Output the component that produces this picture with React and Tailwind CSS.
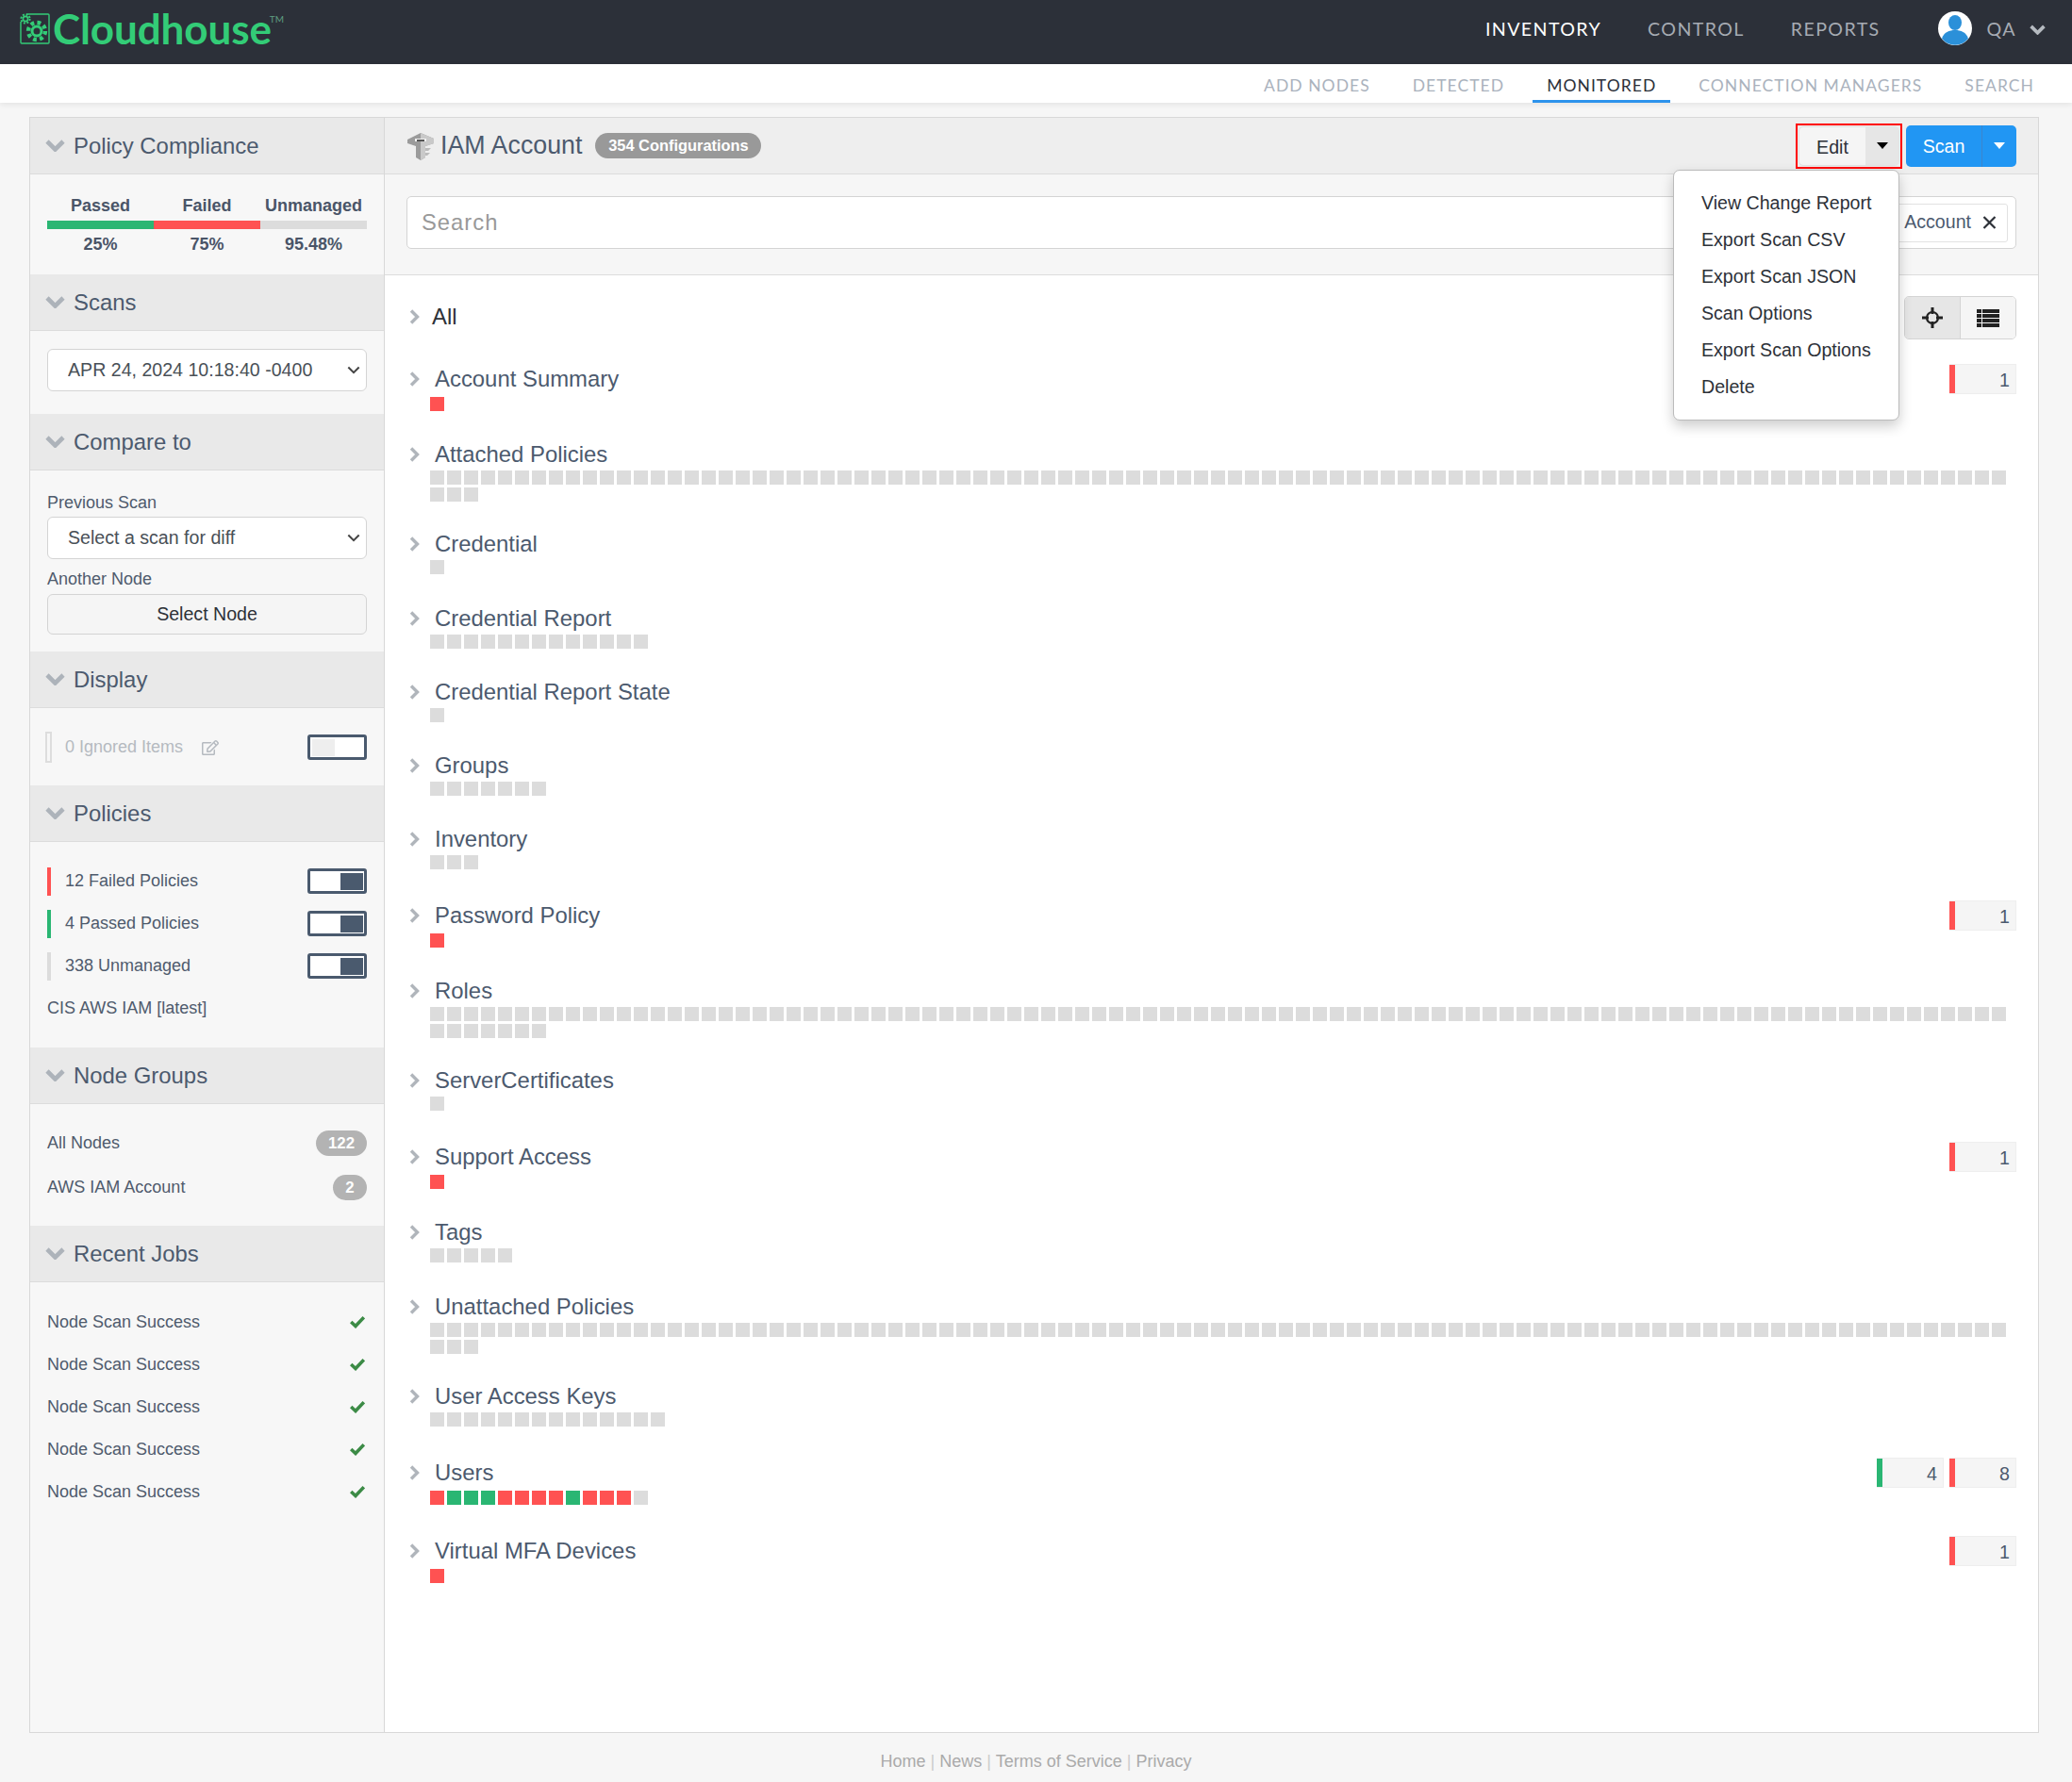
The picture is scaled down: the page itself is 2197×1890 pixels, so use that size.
import React from 'react';
import { FaRegEdit } from 'react-icons/fa';

const nav = ['INVENTORY', 'CONTROL', 'REPORTS'];
const subNav = ['ADD NODES', 'DETECTED', 'MONITORED', 'CONNECTION MANAGERS', 'SEARCH'];
const menu = ['View Change Report', 'Export Scan CSV', 'Export Scan JSON', 'Scan Options', 'Export Scan Options', 'Delete'];

const rows = [
    { name: 'All', h: 'h-[66px]', bar: '' },
    { name: 'Account Summary', h: 'h-[80px]', bar: 'r', counts: [['r', 1]] },
    { name: 'Attached Policies', h: 'h-[95px]', bar: 'x'.repeat(96) },
    { name: 'Credential', h: 'h-[79px]', bar: 'x' },
    { name: 'Credential Report', h: 'h-[78px]', bar: 'x'.repeat(13) },
    { name: 'Credential Report State', h: 'h-[78px]', bar: 'x' },
    { name: 'Groups', h: 'h-[78px]', bar: 'x'.repeat(7) },
    { name: 'Inventory', h: 'h-[81px]', bar: 'xxx' },
    { name: 'Password Policy', h: 'h-[80px]', bar: 'r', counts: [['r', 1]] },
    { name: 'Roles', h: 'h-[95px]', bar: 'x'.repeat(100) },
    { name: 'ServerCertificates', h: 'h-[81px]', bar: 'x' },
    { name: 'Support Access', h: 'h-[80px]', bar: 'r', counts: [['r', 1]] },
    { name: 'Tags', h: 'h-[79px]', bar: 'x'.repeat(5) },
    { name: 'Unattached Policies', h: 'h-[95px]', bar: 'x'.repeat(96) },
    { name: 'User Access Keys', h: 'h-[81px]', bar: 'x'.repeat(14) },
    { name: 'Users', h: 'h-[83px]', bar: 'rgggrrrrgrrrx', counts: [['g', 4], ['r', 8]] },
    { name: 'Virtual MFA Devices', h: 'h-[60px]', bar: 'r', counts: [['r', 1]] },
];

const squareColor = { r: 'bg-[#ff5252]', g: 'bg-[#2ab673]', x: 'bg-[#dcdcdc]' };

function Logo() {
    return (
        <div className="flex items-start ml-[21px] mt-[14px] text-[#33cc77]">
            <svg width="32" height="33" viewBox="0 0 32 33" fill="none" stroke="currentColor">
                <path d="M7 1H30a1 1 0 0 1 1 1V31a1 1 0 0 1-1 1H2a1 1 0 0 1-1-1V9" strokeWidth="1.4" />
                <circle cx="6" cy="6" r="2.6" strokeWidth="1.6" />
                <circle cx="6" cy="6" r="4.6" strokeWidth="2" strokeDasharray="2 1.6" />
                <circle cx="18" cy="19" r="5" strokeWidth="3" />
                <circle cx="18" cy="19" r="9" strokeWidth="4.4" strokeDasharray="3.8 3.3" />
            </svg>
            <span className="font-['Lato',sans-serif] font-bold text-[44px] leading-[36px] -mt-[2px] ml-[3px] tracking-[-0.1px]">Cloudhouse</span>
            <span className="font-['Lato',sans-serif] text-[10px] leading-[10px] mt-[1px] -ml-[2px] text-[#5f9d80]">TM</span>
        </div>
    );
}

function Avatar() {
    return (
        <svg width="36" height="36" viewBox="0 0 36 36" className="mr-[16px] -mt-[2px]">
            <circle cx="18" cy="18" r="18" fill="#fff" />
            <ellipse cx="18" cy="12" rx="7" ry="8" fill="#2b90d9" />
            <path d="M4 29c2-7 8-9 14-9s12 2 14 9a18 18 0 0 1-28 0z" fill="#2b90d9" />
        </svg>
    );
}

function BoltIcon() {
    return (
        <svg width="30" height="30" viewBox="0 0 30 30" className="mr-[6px]">
            <path d="M1 8 15 1l14 6v5l-9 3v12l-5 3-5-3V15L1 12z" fill="#9b9b9b" />
            <path d="M15 1l14 6v5l-9 3v12l-5 3z" fill="#c9c9c9" />
            <path d="M9 7h12v3H9z" fill="#f2f2f2" />
            <path d="M11 8h8v2h-8z" fill="#555" />
            <path d="M20 17h6l-3 3h-3zM20 22h5l-3 3h-2z" fill="#bbb" />
        </svg>
    );
}

function TargetIcon() {
    return (
        <svg width="22" height="22" viewBox="0 0 22 22" fill="none" stroke="#222">
            <circle cx="11" cy="11" r="6" strokeWidth="2.2" />
            <path d="M9.500 0h3v7h-3zM9.500 15h3v7h-3zM0 9.500h7v3H0zM15 9.500h7v3h-7z" fill="#222" stroke="none" />
        </svg>
    );
}

function ListIcon() {
    return (
        <svg width="24" height="19" viewBox="0 0 24 19" fill="#222">
            <path d="M0 0h5v4H0zM6 0h18v4H6zM0 5h5v4H0zM6 5h18v4H6zM0 10h5v4H0zM6 10h18v4H6zM0 15h5v4H0zM6 15h18v4H6z" />
        </svg>
    );
}

function ChevronDown({ className, w = 21, h = 13, stroke = 4.6 }) {
    return (
        <svg width={w} height={h} viewBox="0 0 21 13" fill="none" stroke="currentColor" strokeWidth={stroke} className={className}>
            <path d="M2 2l8.500 8.500L19 2" />
        </svg>
    );
}

function ChevronRight() {
    return (
        <svg width="11" height="16" viewBox="0 0 11 16" fill="none" stroke="#b0b5bb" strokeWidth="3.4">
            <path d="M2 1.500 8.500 8 2 14.500" />
        </svg>
    );
}

function Check() {
    return (
        <svg width="16" height="14" viewBox="0 0 16 14" fill="none" stroke="#3c8b46" strokeWidth="3.6">
            <path d="M1.200 7 6 11.500 14.800 2.200" />
        </svg>
    );
}

function CloseIcon() {
    return (
        <svg width="15" height="14" viewBox="0 0 15 14" fill="none" stroke="#2d3138" strokeWidth="2.2" className="ml-[12px]">
            <path d="M1.500 1 13.500 13M13.500 1 1.500 13" />
        </svg>
    );
}

function Section({ title, className, children }) {
    return (
        <section>
            <div className="h-[60px] bg-[#e9e9e9] border-b border-[#dcdcdc] flex items-center pl-[16px]">
                <ChevronDown className="text-[#adb3ba]" />
                <h2 className="ml-[9px] text-[23.9px] text-[#4c5a6e]">{title}</h2>
            </div>
            <div className={className}>{children}</div>
        </section>
    );
}

function Toggle({ on }) {
    return (
        <div className={`w-[63px] h-[27px] shrink-0 bg-white border-[3px] border-[#4a5a6e] rounded-[3px] flex items-center ${on ? 'justify-end pr-px' : 'justify-start pl-[2px]'}`}>
            <div className={`w-[24px] h-[18px] ${on ? 'bg-[#4a5a6e]' : 'bg-[#eeeeee]'}`} />
        </div>
    );
}

function PolicyRow({ color, label }) {
    return (
        <div className="flex items-center h-[27px]">
            <div className={`w-[4px] h-[30px] shrink-0 ${color}`} />
            <span className="ml-[15px] flex-1 text-[18px] text-[#4f5b6d]">{label}</span>
            <Toggle on />
        </div>
    );
}

function Select({ value }) {
    return (
        <div className="relative">
            <select
                defaultValue={value}
                className="block w-full h-[45px] appearance-none bg-white border border-[#d4d4d4] rounded-[6px] pl-[21px] pr-[30px] text-[19.6px] text-[#495057]"
            >
                <option>{value}</option>
            </select>
            <ChevronDown w={14} h={9} stroke={3} className="absolute right-[7px] top-[18px] text-[#444444] pointer-events-none" />
        </div>
    );
}

function Count({ kind, value }) {
    return (
        <div className="w-[71px] h-[32px] flex bg-[#f5f5f5] border border-[#eeeeee] border-l-0">
            <div className={`w-[6px] h-full ${squareColor[kind]}`} />
            <div className="flex-1 text-right pr-[6px] text-[19.6px] leading-[32px] text-[#4c5a6e]">{value}</div>
        </div>
    );
}

function Row({ row }) {
    return (
        <div className={`${row.h} pl-[26px] pr-[23px]`}>
            <div className="flex items-center h-[32px]">
                <ChevronRight />
                <span className={`text-[23.9px] ${row.name === 'All' ? 'ml-[13px] text-[#2d3138]' : 'ml-[16px] text-[#4c5a6e]'}`}>{row.name}</span>
                {row.counts && (
                    <div className="ml-auto flex gap-[6px]">
                        {row.counts.map(([kind, value]) => <Count key={kind} kind={kind} value={value} />)}
                    </div>
                )}
            </div>
            {row.bar && (
                <div className={`${row.counts ? 'mt-[3px]' : 'mt-px'} ml-[22px] w-[1682px] flex flex-wrap gap-[3px]`}>
                    {row.bar.split('').map((kind, i) => <div key={i} className={`w-[15px] h-[15px] ${squareColor[kind]}`} />)}
                </div>
            )}
        </div>
    );
}

export default function App() {
    return (
        <div className="min-h-[1890px] bg-[#f6f6f6] font-['Liberation_Sans',Arial,sans-serif]">
            <header className="h-[68px] bg-[#2c3039] flex items-start justify-between">
                <Logo />
                <div className="flex items-center h-full pb-[6px] font-['Lato',sans-serif] text-[19.6px] tracking-[1.4px] text-[#a6abb3]">
                    {nav.map((item) => (
                        <a key={item} className={`mr-[49px] ${item === 'INVENTORY' ? 'text-white' : ''}`}>{item}</a>
                    ))}
                    <div className="ml-[12px] flex items-center">
                        <Avatar />
                        <span>QA</span>
                        <ChevronDown w={17} h={11} className="ml-[14px] mr-[28px] text-[#b5bac0]" />
                    </div>
                </div>
            </header>
            <nav className="h-[41px] bg-white shadow-[0_2px_6px_rgba(0,0,0,0.08)] flex justify-end gap-[15px] pr-[25px] font-['Lato',sans-serif] text-[17.5px] tracking-[1.05px] text-[#aab2bd]">
                {subNav.map((item) => (
                    <a key={item} className={`px-[15px] h-full leading-[45px] ${item === 'MONITORED' ? 'text-[#2c3039] border-b-[3px] border-[#2d93ec]' : ''}`}>{item}</a>
                ))}
            </nav>
            <main className="ml-[31px] mt-[15px] w-[2131px] h-[1714px] border border-[#d8d8d8] flex bg-white">
                <aside className="w-[376px] shrink-0 bg-[#f7f7f7] border-r border-[#d8d8d8]">
                    <Section title="Policy Compliance" className="h-[106px] px-[18px] pt-[20px]">
                        <div className="grid grid-cols-3 text-center text-[18px] leading-[26px] font-bold text-[#4a5568]">
                            <span>Passed</span>
                            <span>Failed</span>
                            <span className="whitespace-nowrap">Unmanaged</span>
                        </div>
                        <div className="grid grid-cols-3 h-[9px] mt-[3px]">
                            <div className="bg-[#2ab673]" />
                            <div className="bg-[#ff5252]" />
                            <div className="bg-[#dcdcdc]" />
                        </div>
                        <div className="grid grid-cols-3 mt-[3px] text-center text-[18px] leading-[26px] font-bold text-[#4a5568]">
                            <span>25%</span>
                            <span>75%</span>
                            <span>95.48%</span>
                        </div>
                    </Section>
                    <Section title="Scans" className="h-[88px] px-[18px] pt-[19px]">
                        <Select value="APR 24, 2024 10:18:40 -0400" />
                    </Section>
                    <Section title="Compare to" className="h-[192px] px-[18px] pt-[21px] text-[18px] text-[#4f5b6d]">
                        <div className="leading-[26px]">Previous Scan</div>
                        <div className="mt-[2px]"><Select value="Select a scan for diff" /></div>
                        <div className="mt-[8px] leading-[26px]">Another Node</div>
                        <button className="mt-[3px] w-full h-[43px] bg-[#f5f5f5] border border-[#d4d4d4] rounded-[6px] text-[19.6px] text-[#2d3138]">Select Node</button>
                    </Section>
                    <Section title="Display" className="h-[82px] pl-[16px] pr-[18px] pt-[28px]">
                        <div className="flex items-center h-[27px]">
                            <div className="w-[7px] h-[33px] border-2 border-[#dddddd] shrink-0" />
                            <span className="ml-[14px] text-[18px] text-[#b5bac0]">0 Ignored Items</span>
                            <FaRegEdit size={18} className="ml-[20px] text-[#b5bac0]" />
                            <div className="ml-auto"><Toggle /></div>
                        </div>
                    </Section>
                    <Section title="Policies" className="h-[218px] px-[18px] pt-[28px]">
                        <div className="flex flex-col gap-[18px]">
                            <PolicyRow color="bg-[#ff5252]" label="12 Failed Policies" />
                            <PolicyRow color="bg-[#2ab673]" label="4 Passed Policies" />
                            <PolicyRow color="bg-[#dcdcdc]" label="338 Unmanaged" />
                        </div>
                        <div className="mt-[18px] leading-[26px] text-[18px] text-[#4f5b6d]">CIS AWS IAM [latest]</div>
                    </Section>
                    <Section title="Node Groups" className="h-[129px] px-[18px] pt-[28px] text-[18px] text-[#4f5b6d]">
                        <div className="flex flex-col gap-[20px]">
                            <div className="flex items-center justify-between h-[27px]">
                                <span>All Nodes</span>
                                <span className="w-[54px] h-[27px] rounded-full bg-[#b3b3b3] text-white font-bold text-[16.8px] leading-[27px] text-center">122</span>
                            </div>
                            <div className="flex items-center justify-between h-[27px]">
                                <span>AWS IAM Account</span>
                                <span className="w-[36px] h-[27px] rounded-full bg-[#b3b3b3] text-white font-bold text-[16.8px] leading-[27px] text-center">2</span>
                            </div>
                        </div>
                    </Section>
                    <Section title="Recent Jobs" className="px-[18px] pt-[29px] text-[18px] text-[#4f5b6d]">
                        <div className="flex flex-col gap-[19px]">
                            {[0, 1, 2, 3, 4].map((i) => (
                                <div key={i} className="flex items-center justify-between h-[26px] pr-[2px]">
                                    <span>Node Scan Success</span>
                                    <Check />
                                </div>
                            ))}
                        </div>
                    </Section>
                </aside>
                <div className="flex-1 min-w-0">
                    <div className="h-[60px] bg-[#eeeeee] border-b border-[#dcdcdc] flex items-center pl-[23px] pr-[23px]">
                        <BoltIcon />
                        <h1 className="text-[26.8px] text-[#4c5a6e]">IAM Account</h1>
                        <span className="ml-[14px] w-[176px] h-[27px] rounded-full bg-[#999999] text-white font-bold text-[16.4px] leading-[27px] text-center">354 Configurations</span>
                        <div className="ml-auto flex items-center gap-[4px]">
                            <div className="relative border-2 border-[#ff0000] h-[48px] w-[113px] p-px">
                                <div className="h-full flex bg-[#f5f5f5] border border-[#e2e2e2] rounded-[5px] overflow-hidden">
                                    <span className="w-[70px] text-center text-[19.6px] leading-[42px] text-[#2d3138]">Edit</span>
                                    <span className="flex-1 bg-[#e6e6e6] flex items-center justify-center">
                                        <span className="border-x-[6px] border-x-transparent border-t-[7px] border-t-black" />
                                    </span>
                                </div>
                                <div className="absolute z-10 right-[1px] top-[47px] w-[240px] h-[266px] bg-white border border-[#bbbbbb] rounded-[7px] shadow-[0_6px_14px_rgba(0,0,0,0.2)] pt-[15px] pl-[29px] text-[19.6px] text-[#2d3138]">
                                    {menu.map((item) => <div key={item} className="h-[39px] leading-[39px] whitespace-nowrap">{item}</div>)}
                                </div>
                            </div>
                            <div className="flex w-[117px] h-[44px] rounded-[5px] bg-[#2196f3] text-white overflow-hidden">
                                <span className="w-[80px] text-center text-[19.6px] leading-[44px]">Scan</span>
                                <span className="flex-1 border-l border-[#3c85cc] flex items-center justify-center">
                                    <span className="border-x-[6px] border-x-transparent border-t-[7px] border-t-white" />
                                </span>
                            </div>
                        </div>
                    </div>
                    <div className="h-[107px] bg-[#f6f6f6] border-b border-[#dcdcdc] pt-[23px] px-[23px]">
                        <div className="h-[56px] bg-white border border-[#d4d4d4] rounded-[5px] flex items-center justify-between pl-[15px] pr-[8px]">
                            <span className="text-[23.8px] tracking-[1px] text-[#999999]">Search</span>
                            <span className="h-[41px] pl-[10px] pr-[11px] border border-[#e2e2e2] rounded-[3px] flex items-center text-[19.6px] text-[#4c5a6e]">
                                IAM Account
                                <CloseIcon />
                            </span>
                        </div>
                    </div>
                    <div className="relative pt-[28px]">
                        <div className="absolute right-[23px] top-[22px] flex w-[119px] h-[46px] border border-[#d4d4d4] rounded-[5px] overflow-hidden">
                            <div className="w-[59px] bg-[#e6e6e6] border-r border-[#d4d4d4] flex items-center justify-center"><TargetIcon /></div>
                            <div className="flex-1 bg-[#f5f5f5] flex items-center justify-center"><ListIcon /></div>
                        </div>
                        {rows.map((row) => <Row key={row.name} row={row} />)}
                    </div>
                </div>
            </main>
            <footer className="mt-[17px] text-center text-[18px] leading-[26px] text-[#aaaaaa]">
                Home <span className="text-[#cccccc]">|</span> News <span className="text-[#cccccc]">|</span> Terms of Service <span className="text-[#cccccc]">|</span> Privacy
            </footer>
        </div>
    );
}
